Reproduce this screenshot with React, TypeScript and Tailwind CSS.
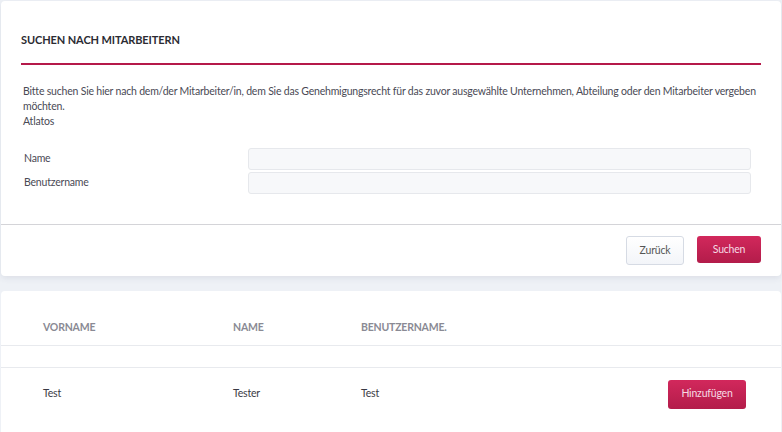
export default function App() {
	return (
		<div className="min-h-screen bg-[#eef1f6] pt-px font-['Lato',sans-serif] text-[10.5px] tracking-[-0.2px] text-[#4a4a55]">
			<section className="mx-px rounded-[4px] bg-white shadow-[0_2px_6px_rgba(60,70,100,0.10)]">
				<div className="px-5 pt-[32px]">
					<h1 className="text-[11px] font-bold leading-[14px] tracking-[-0.1px] text-[#2b2b33]">SUCHEN NACH MITARBEITERN</h1>
					<div className="mt-[16px] h-[2px] bg-[#b5194a]" />
				</div>
				<div className="px-[22px] pt-[19px] leading-[15px]">
					<p>
						Bitte suchen Sie hier nach dem/der Mitarbeiter/in, dem Sie das Genehmigungsrecht für das zuvor ausgewählte Unternehmen, Abteilung oder den Mitarbeiter vergeben möchten.
					</p>
					<p>Atlatos</p>
				</div>
				<div className="grid grid-cols-[224px_503px] gap-y-[2px] pl-[23px] pt-[19px] pb-[30px]">
					<label className="flex h-[22px] items-center">Name</label>
					<input className="h-[22px] rounded-[3px] border border-[#e6e8ec] bg-[#f7f8fa] outline-none" />
					<label className="flex h-[22px] items-center">Benutzername</label>
					<input className="h-[22px] rounded-[3px] border border-[#e6e8ec] bg-[#f7f8fa] outline-none" />
				</div>
				<div className="flex justify-end gap-[13px] border-t border-[#d4d4d8] px-5 pt-[11px] pb-[11px]">
					<button type="button" className="h-[29px] w-[58px] rounded-[3px] border border-[#d6dbe4] bg-gradient-to-b from-white to-[#f3f5f9] text-[#555]">
						Zurück
					</button>
					<button type="button" className="h-[27px] w-[64px] rounded-[3px] bg-gradient-to-b from-[#d2285c] to-[#b31c4a] text-[#f6dbe4]">
						Suchen
					</button>
				</div>
			</section>

			<section className="mx-px mt-[15px] rounded-t-[4px] bg-white pb-8">
				<div className="grid h-[54px] grid-cols-[190px_128px_1fr] items-end pb-[9px] pl-[42px] text-[10.5px] font-bold text-[#8a8a94]">
					<span>VORNAME</span>
					<span>NAME</span>
					<span>BENUTZERNAME.</span>
				</div>
				<div className="h-[23px] border-y border-[#e8eaee]" />
				<div className="grid h-[52px] grid-cols-[190px_128px_1fr_auto] items-center pl-[42px] pr-[35px] text-[#3a3a44]">
					<span>Test</span>
					<span>Tester</span>
					<span>Test</span>
					<button type="button" className="h-[29px] w-[78px] rounded-[3px] bg-gradient-to-b from-[#d2285c] to-[#b31c4a] text-[#f6dbe4]">
						Hinzufügen
					</button>
				</div>
			</section>
		</div>
	);
}
